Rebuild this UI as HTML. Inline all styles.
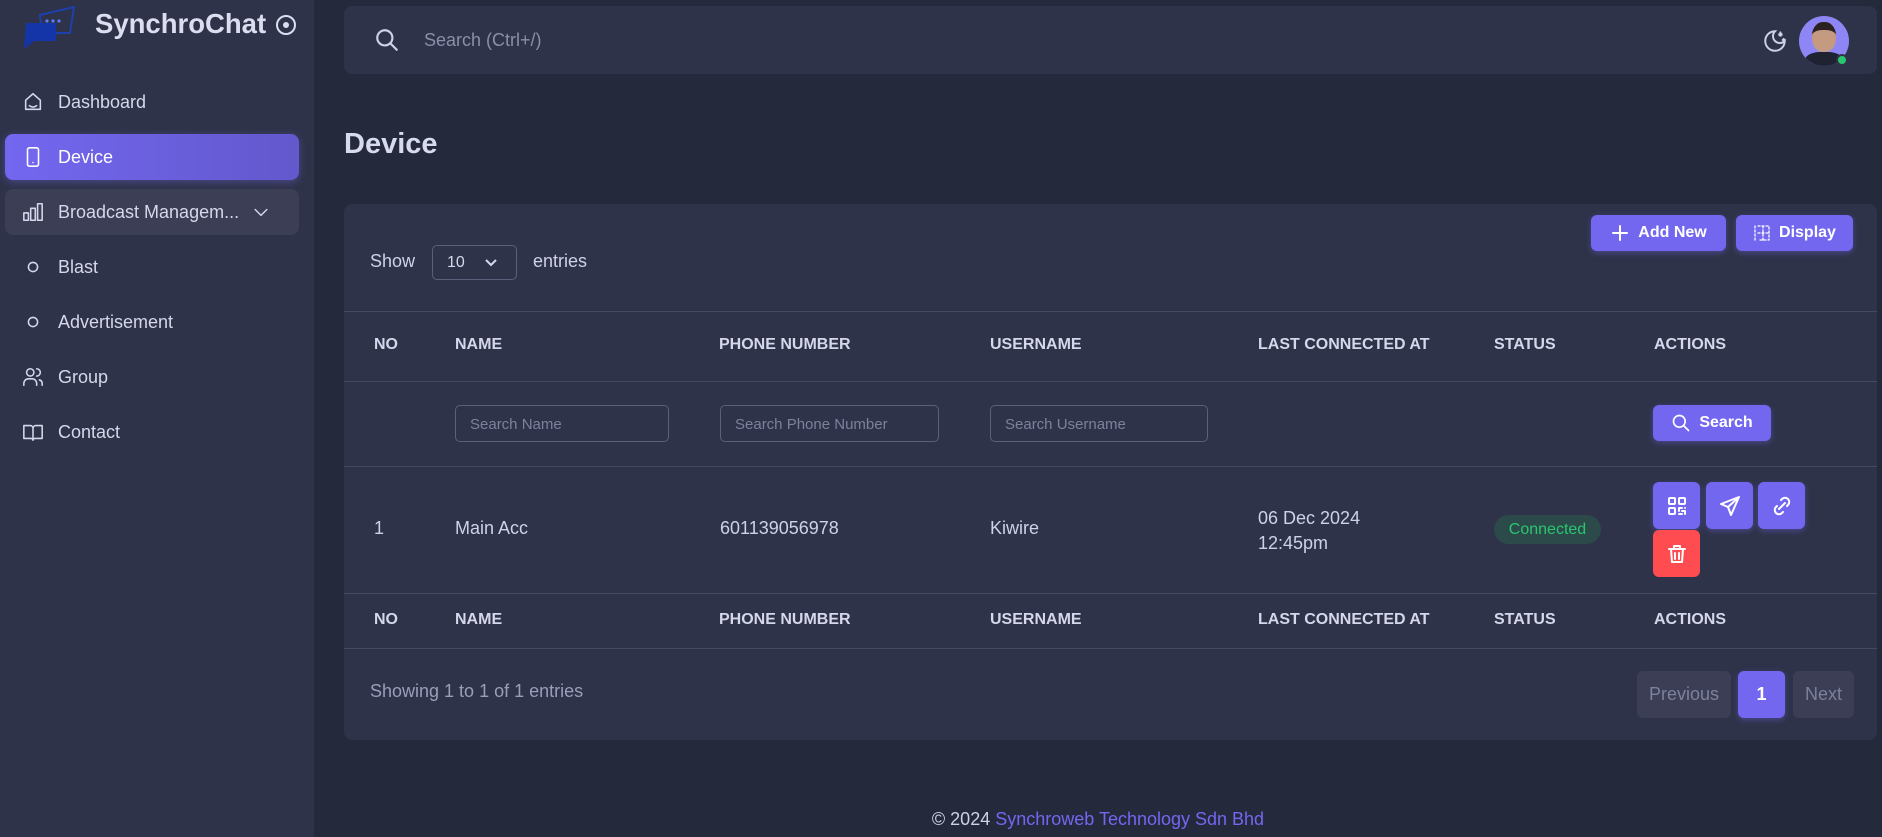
<!DOCTYPE html>
<html><head><meta charset="utf-8"><style>
*{box-sizing:border-box;margin:0;padding:0}
body{width:1882px;height:837px;background:#25293c;font-family:"Liberation Sans",sans-serif;color:#cfd1e6;position:relative;overflow:hidden}
.a{position:absolute}
.sb{left:0;top:0;width:314px;height:837px;background:#2f3349}
.nav{left:5px;width:294px;height:46px;border-radius:8px;display:flex;align-items:center;padding-left:17px;font-size:18px;color:#d5d7ea}
.nav svg{width:22px;height:22px;margin-right:14px;fill:none;stroke:#d5d7ea;stroke-width:1.7;stroke-linecap:round;stroke-linejoin:round}
.th{font-size:16px;font-weight:bold;color:#d5d7ea;top:0}
.line{left:344px;width:1533px;height:1px;background:#444a63}
.inp{height:37px;border:1px solid #5a607b;border-radius:5px;font-size:15px;color:#7c819c;padding:10px 14px}
.btn{background:#7367f0;border-radius:6px;color:#fff;font-weight:bold;display:flex;align-items:center;justify-content:center;box-shadow:0 2px 6px rgba(115,103,240,.4)}
.btn svg{fill:none;stroke:#fff;stroke-width:2;stroke-linecap:round;stroke-linejoin:round}
</style></head><body>
<div class="a sb"></div>
<svg class="a" style="left:20px;top:5px" width="56" height="44" viewBox="0 0 56 44"><path d="M20 10 L54 2 L50 28 L22 28 Z" fill="none" stroke="#1e3fae" stroke-width="2"/><path d="M6 18 H36 V36 H14 L4 44 Z" fill="#1435a8"/><circle cx="27" cy="16" r="1.6" fill="#5b7cff"/><circle cx="33" cy="16" r="1.6" fill="#5b7cff"/><circle cx="39" cy="16" r="1.6" fill="#5b7cff"/></svg>
<div class="a" style="left:95px;top:8px;font-size:27.5px;font-weight:bold;color:#dcdef0">SynchroChat</div>
<svg class="a" style="left:275px;top:14px" width="22" height="22" viewBox="0 0 22 22"><circle cx="11" cy="11" r="9" fill="none" stroke="#dcdef0" stroke-width="2"/><circle cx="11" cy="11" r="3" fill="#dcdef0"/></svg>

<div class="a nav" style="top:79px"><svg viewBox="0 0 24 24"><path d="M4 10 L12 3 L20 10 V20 H4 Z"/><path d="M8 16 Q12 19 16 16"/></svg>Dashboard</div>
<div class="a nav" style="top:134px;background:linear-gradient(90deg,#7367f0,#6358cc);color:#fff;box-shadow:0 2px 8px rgba(115,103,240,.4)"><svg viewBox="0 0 24 24" style="stroke:#fff"><rect x="6" y="2" width="12" height="20" rx="2"/><path d="M12 18v.01"/></svg>Device</div>
<div class="a nav" style="top:189px;background:#3b3e54"><svg viewBox="0 0 24 24"><rect x="2" y="13" width="5" height="8"/><rect x="9.5" y="8" width="5" height="13"/><rect x="17" y="3" width="5" height="18"/></svg>Broadcast Managem...<svg viewBox="0 0 24 24" style="margin-left:12px;width:20px"><path d="M5 9l7 7 7-7"/></svg></div>
<div class="a nav" style="top:244px"><svg viewBox="0 0 24 24"><circle cx="12" cy="12" r="5"/></svg>Blast</div>
<div class="a nav" style="top:299px"><svg viewBox="0 0 24 24"><circle cx="12" cy="12" r="5"/></svg>Advertisement</div>
<div class="a nav" style="top:354px"><svg viewBox="0 0 24 24"><circle cx="9" cy="7" r="4"/><path d="M2 21v-2a5 5 0 0 1 5-5h4a5 5 0 0 1 5 5v2"/><path d="M16 3a4 4 0 0 1 0 8M22 21v-2a4 4 0 0 0-3-3.8"/></svg>Group</div>
<div class="a nav" style="top:409px"><svg viewBox="0 0 24 24"><path d="M2 5h7a3 3 0 0 1 3 3v13a2 2 0 0 0-2-2H2zM22 5h-7a3 3 0 0 0-3 3v13a2 2 0 0 1 2-2h8z"/></svg>Contact</div>

<div class="a" style="left:344px;top:6px;width:1533px;height:68px;background:#2f3349;border-radius:8px"></div>
<svg class="a" style="left:374px;top:27px" width="26" height="26" viewBox="0 0 24 24" fill="none" stroke="#cfd1e6" stroke-width="2" stroke-linecap="round"><circle cx="10" cy="10" r="7"/><path d="M21 21l-6-6"/></svg>
<div class="a" style="left:424px;top:30px;font-size:18px;color:#8a8fa9">Search (Ctrl+/)</div>
<svg class="a" style="left:1762px;top:28px" width="26" height="26" viewBox="0 0 24 24" fill="none" stroke="#cfd1e6" stroke-width="1.8" stroke-linecap="round"><path d="M12 3a6 6 0 0 0 9 9 9 9 0 1 1-9-9z"/><path d="M17 4a2 2 0 0 0 2 2 2 2 0 0 0-2 2 2 2 0 0 0-2-2 2 2 0 0 0 2-2M19 11h2M20 10v2"/></svg>
<div class="a" style="left:1799px;top:16px;width:50px;height:50px;border-radius:50%;background:#8f86f5;overflow:hidden"><div class="a" style="left:13px;top:6px;width:24px;height:30px;border-radius:45%;background:#c49a80;border-top:8px solid #2a2220"></div><div class="a" style="left:6px;top:36px;width:38px;height:20px;border-radius:40% 40% 0 0;background:#1f2230"></div></div>
<div class="a" style="left:1836px;top:54px;width:12px;height:12px;border-radius:50%;background:#28c76f;border:2px solid #2f3349"></div>

<div class="a" style="left:344px;top:128px;font-size:29px;font-weight:bold;color:#d8dbee">Device</div>

<div class="a" style="left:344px;top:204px;width:1533px;height:536px;background:#2f3349;border-radius:8px"></div>
<div class="a" style="left:370px;top:251px;font-size:18px">Show</div>
<div class="a" style="left:432px;top:245px;width:85px;height:35px;border:1px solid #5a607b;border-radius:5px;font-size:16px;padding:8px 14px;color:#d5d7ea">10<svg class="a" style="left:50px;top:10px" width="16" height="14" viewBox="0 0 16 14" fill="none" stroke="#d5d7ea" stroke-width="2"><path d="M3 4l5 5 5-5"/></svg></div>
<div class="a" style="left:533px;top:251px;font-size:18px">entries</div>
<div class="a btn" style="left:1591px;top:215px;width:135px;height:36px;font-size:16px"><svg width="20" height="20" viewBox="0 0 20 20" style="margin-right:8px"><path d="M10 3v14M3 10h14"/></svg>Add New</div>
<div class="a btn" style="left:1736px;top:215px;width:117px;height:36px;font-size:16px"><svg width="18" height="18" viewBox="0 0 18 18" style="margin-right:8px;stroke-width:1.3"><path d="M2 2v14M5 2h11v14H5M10 2v14M5 9h11" stroke-dasharray="2 2"/></svg>Display</div>

<div class="line a" style="top:311px"></div>
<div class="a" style="left:0;top:336px;width:1882px">
<div class="a th" style="left:374px">NO</div><div class="a th" style="left:455px">NAME</div><div class="a th" style="left:719px">PHONE NUMBER</div><div class="a th" style="left:990px">USERNAME</div><div class="a th" style="left:1258px">LAST CONNECTED AT</div><div class="a th" style="left:1494px">STATUS</div><div class="a th" style="left:1654px">ACTIONS</div></div>
<div class="line a" style="top:381px"></div>
<div class="a inp" style="left:455px;top:405px;width:214px">Search Name</div>
<div class="a inp" style="left:720px;top:405px;width:219px">Search Phone Number</div>
<div class="a inp" style="left:990px;top:405px;width:218px">Search Username</div>
<div class="a btn" style="left:1653px;top:405px;width:118px;height:36px;font-size:16px"><svg width="20" height="20" viewBox="0 0 24 24" style="margin-right:8px"><circle cx="10" cy="10" r="7"/><path d="M21 21l-6-6"/></svg>Search</div>
<div class="line a" style="top:466px"></div>
<div class="a" style="top:518px;left:374px;font-size:18px">1</div>
<div class="a" style="top:518px;left:455px;font-size:18px">Main Acc</div>
<div class="a" style="top:518px;left:720px;font-size:18px">601139056978</div>
<div class="a" style="top:518px;left:990px;font-size:18px">Kiwire</div>
<div class="a" style="top:506px;left:1258px;font-size:18px;line-height:25px">06 Dec 2024<br>12:45pm</div>
<div class="a" style="top:515px;left:1494px;width:107px;height:29px;border-radius:15px;background:#2c4a4a;color:#28c76f;font-size:16px;display:flex;align-items:center;justify-content:center">Connected</div>
<div class="a btn" style="left:1653px;top:482px;width:47px;height:47px"><svg width="24" height="24" viewBox="0 0 24 24"><rect x="4" y="4" width="6" height="6" rx="1"/><rect x="14" y="4" width="6" height="6" rx="1"/><rect x="4" y="14" width="6" height="6" rx="1"/><path d="M14 14h3M20 14v0M14 14v3M14 20h3M17 17h3v3"/></svg></div>
<div class="a btn" style="left:1706px;top:482px;width:47px;height:47px"><svg width="24" height="24" viewBox="0 0 24 24"><path d="M21 3L3 10l7 3 3 8z M10 13l11-10"/></svg></div>
<div class="a btn" style="left:1758px;top:482px;width:47px;height:47px"><svg width="24" height="24" viewBox="0 0 24 24"><path d="M9 15l6-6M11 6l1-1a4 4 0 0 1 6 6l-1 1M13 18l-1 1a4 4 0 0 1-6-6l1-1"/></svg></div>
<div class="a btn" style="left:1653px;top:530px;width:47px;height:47px;background:#ff4c51;box-shadow:none"><svg width="24" height="24" viewBox="0 0 24 24"><path d="M4 7h16M6 7l1 13h10l1-13M9 7V4h6v3M10 11v6M14 11v6"/></svg></div>
<div class="line a" style="top:593px"></div>
<div class="a" style="left:0;top:611px;width:1882px">
<div class="a th" style="left:374px">NO</div><div class="a th" style="left:455px">NAME</div><div class="a th" style="left:719px">PHONE NUMBER</div><div class="a th" style="left:990px">USERNAME</div><div class="a th" style="left:1258px">LAST CONNECTED AT</div><div class="a th" style="left:1494px">STATUS</div><div class="a th" style="left:1654px">ACTIONS</div></div>
<div class="line a" style="top:648px"></div>
<div class="a" style="left:370px;top:681px;font-size:18px;color:#9a9eb8">Showing 1 to 1 of 1 entries</div>
<div class="a" style="left:1637px;top:671px;width:94px;height:47px;border-radius:6px;background:#3b3e54;color:#7c819c;font-size:18px;display:flex;align-items:center;justify-content:center">Previous</div>
<div class="a btn" style="left:1738px;top:671px;width:47px;height:47px;font-size:18px">1</div>
<div class="a" style="left:1793px;top:671px;width:61px;height:47px;border-radius:6px;background:#3b3e54;color:#7c819c;font-size:18px;display:flex;align-items:center;justify-content:center">Next</div>

<div class="a" style="left:314px;top:809px;width:1568px;text-align:center;font-size:18px;color:#cfd1e6">© 2024 <span style="color:#7367f0">Synchroweb Technology Sdn Bhd</span></div>
</body></html>
